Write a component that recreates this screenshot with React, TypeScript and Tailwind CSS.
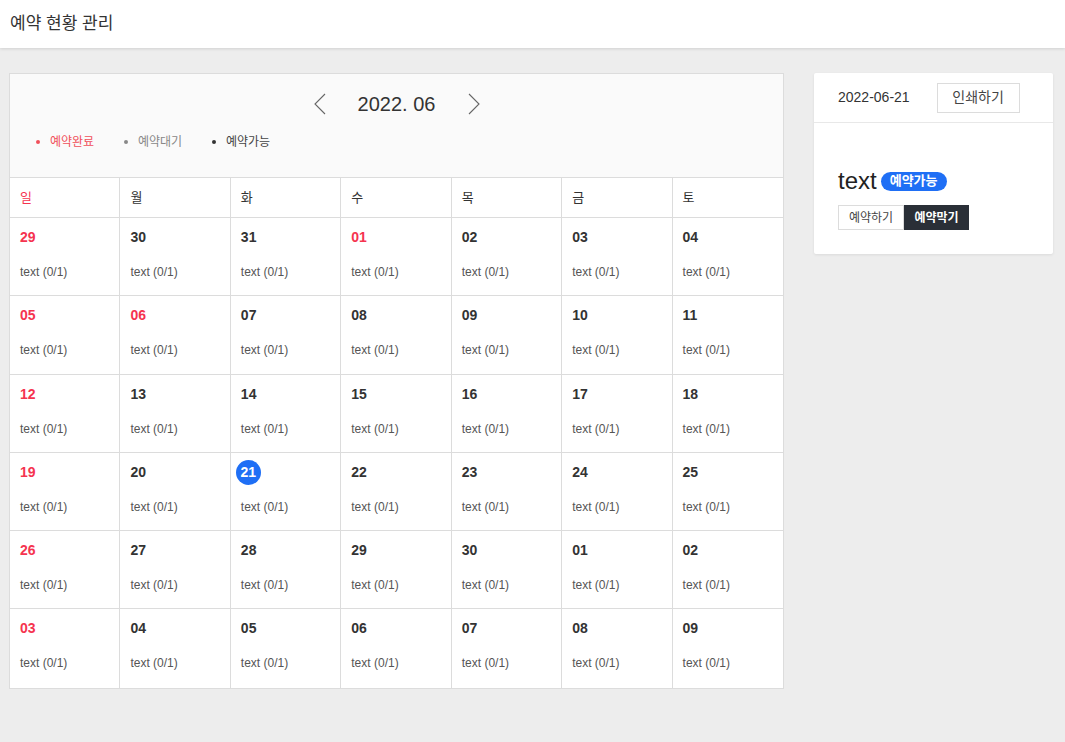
import React from "react";

const FONT = { fontFamily: '"Liberation Sans", "Noto Sans CJK KR", sans-serif' };

const DAYS = ["일", "월", "화", "수", "목", "금", "토"];

const WEEKS = [
  ["29", "30", "31", "01", "02", "03", "04"],
  ["05", "06", "07", "08", "09", "10", "11"],
  ["12", "13", "14", "15", "16", "17", "18"],
  ["19", "20", "21", "22", "23", "24", "25"],
  ["26", "27", "28", "29", "30", "01", "02"],
  ["03", "04", "05", "06", "07", "08", "09"],
];

// holidays shown in red besides sundays
const RED = ["0-3", "1-1"];
const SELECTED = "3-2";

const Chevron = ({ dir }: { dir: "left" | "right" }) => (
  <svg width="12" height="22" viewBox="0 0 12 22" fill="none">
    <path
      d={dir === "left" ? "M11 1 L1 11 L11 21" : "M1 1 L11 11 L1 21"}
      stroke="#666"
      strokeWidth="1.1"
    />
  </svg>
);

const DayCell = ({ w, d, date }: { w: number; d: number; date: string }) => {
  const key = `${w}-${d}`;
  const red = d === 0 || RED.includes(key);
  const selected = key === SELECTED;
  return (
    <div
      className={`h-[78.3px] px-[10px] pt-[11px] ${d < 6 ? "border-r" : ""} ${
        w < 5 ? "border-b" : ""
      } border-[#dcdcdc]`}
    >
      {selected ? (
        <div className="w-[25px] h-[25px] -ml-[5px] -mt-[4px] mb-[-5px] rounded-full bg-[#1f6ff5] text-white text-[14px] font-bold flex items-center justify-center">
          {date}
        </div>
      ) : (
        <div className={`text-[14px] font-bold leading-[16px] ${red ? "text-[#f5344f]" : "text-[#333]"}`}>
          {date}
        </div>
      )}
      <div className="mt-[20px] text-[12px] text-[#555] leading-[14px]">text (0/1)</div>
    </div>
  );
};

export default function App() {
  return (
    <div className="min-h-[742px] bg-[#ededed]" style={FONT}>
      <header className="h-[48px] bg-white flex items-center px-[10px] shadow-[0_1px_3px_rgba(0,0,0,0.12)] relative">
        <h1 className="text-[17px] text-[#333]">예약 현황 관리</h1>
      </header>

      <main className="flex items-start pt-[25px] pl-[9px]">
        {/* Calendar */}
        <section className="w-[775px] border border-[#dcdcdc] bg-white">
          <div className="h-[104px] bg-[#fafafa] border-b border-[#dcdcdc] pt-[15px]">
            <div className="flex items-center justify-center gap-[31px]">
              <button className="flex">
                <Chevron dir="left" />
              </button>
              <span className="text-[20px] text-[#333] w-[80px] text-center">2022. 06</span>
              <button className="flex">
                <Chevron dir="right" />
              </button>
            </div>
            <ul className="flex pl-[26px] mt-[14px] text-[12px]">
              <li className="w-[88px] flex items-center gap-[10px] text-[#f0505a]">
                <span className="w-[4px] h-[4px] rounded-full bg-[#f0505a]" />
                예약완료
              </li>
              <li className="w-[88px] flex items-center gap-[10px] text-[#888]">
                <span className="w-[4px] h-[4px] rounded-full bg-[#888]" />
                예약대기
              </li>
              <li className="w-[88px] flex items-center gap-[10px] text-[#444]">
                <span className="w-[4px] h-[4px] rounded-full bg-[#333]" />
                예약가능
              </li>
            </ul>
          </div>

          <div className="grid grid-cols-7 border-b border-[#dcdcdc]">
            {DAYS.map((day, i) => (
              <div
                key={day}
                className={`h-[39px] flex items-center px-[10px] text-[13px] ${
                  i < 6 ? "border-r border-[#dcdcdc]" : ""
                } ${i === 0 ? "text-[#f5344f]" : "text-[#333]"}`}
              >
                {day}
              </div>
            ))}
          </div>

          <div className="grid grid-cols-7">
            {WEEKS.map((week, w) =>
              week.map((date, d) => <DayCell key={`${w}-${d}`} w={w} d={d} date={date} />)
            )}
          </div>
        </section>

        {/* Detail panel */}
        <aside className="ml-[30px] w-[239px] bg-white rounded-[2px] shadow-[0_1px_3px_rgba(0,0,0,0.08)]">
          <div className="h-[50px] flex items-center px-[24px] gap-[27px] border-b border-[#e8e8e8]">
            <span className="text-[14px] text-[#333]">2022-06-21</span>
            <button className="w-[83px] h-[30px] border border-[#dcdcdc] text-[14px] text-[#444] bg-white">
              인쇄하기
            </button>
          </div>
          <div className="px-[24px] pt-[44px] pb-[24px]">
            <div className="flex items-center gap-[4px]">
              <span className="text-[24px] text-[#222] leading-[28px]">text</span>
              <span className="h-[19px] px-[9px] rounded-full bg-[#1f6ff5] text-white text-[13px] font-bold flex items-center">
                예약가능
              </span>
            </div>
            <div className="flex mt-[10px]">
              <button className="w-[66px] h-[25px] border border-[#dcdcdc] bg-white text-[12px] text-[#444]">
                예약하기
              </button>
              <button className="w-[65px] h-[25px] bg-[#2a2f37] text-white text-[12px] font-bold">
                예약막기
              </button>
            </div>
          </div>
        </aside>
      </main>
    </div>
  );
}
